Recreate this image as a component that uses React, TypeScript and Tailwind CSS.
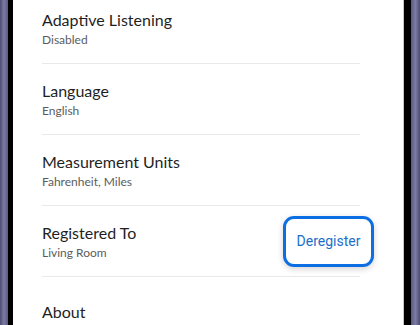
import React from "react";

const rows = [
  { title: "Adaptive Listening", sub: "Disabled" },
  { title: "Language", sub: "English" },
  { title: "Measurement Units", sub: "Fahrenheit, Miles" },
  { title: "Registered To", sub: "Living Room", action: "Deregister" },
  { title: "About" },
];

export default function App() {
  return (
    <div
      className="flex h-[325px] w-[420px] overflow-hidden bg-white"
      style={{ fontFamily: 'Lato, "Noto Sans", sans-serif' }}
    >
      {/* left bezel */}
      <div className="w-[8px] bg-gradient-to-r from-[#4d4d73] via-[#7b7ba6] to-[#5a5a82]" />
      <div className="w-[5px] bg-black" />

      {/* screen */}
      <div className="flex-1 bg-white pl-[29px] pr-[43px]">
        <div className="-mt-[7px] flex flex-col">
          {rows.map((r) => (
            <div
              key={r.title}
              className="flex h-[71px] items-center justify-between border-b border-[#e9e9e9]"
            >
              <div className="flex flex-col">
                <span className="text-[16px] leading-[22px] text-[#1f1f1f]">{r.title}</span>
                {r.sub && (
                  <span className="text-[12px] leading-[17px] text-[#5c5c5c]">{r.sub}</span>
                )}
              </div>
              {r.action && (
                <button
                  className="-mr-[14px] flex h-[51px] w-[91px] items-center justify-center rounded-[11px] border-[3px] border-[#0b6fe3] bg-white text-[14px] text-[#1b6fc9] shadow-[0_2px_6px_rgba(0,0,0,0.18)]"
                  style={{ fontFamily: 'Roboto, "Noto Sans", sans-serif' }}
                >
                  {r.action}
                </button>
              )}
            </div>
          ))}
        </div>
      </div>

      {/* right bezel */}
      <div className="w-px bg-[#c8c8c8]" />
      <div className="w-[7px] bg-black" />
      <div className="w-[9px] bg-gradient-to-r from-[#5a5a82] via-[#7b7ba6] to-[#4d4d73]" />
    </div>
  );
}
